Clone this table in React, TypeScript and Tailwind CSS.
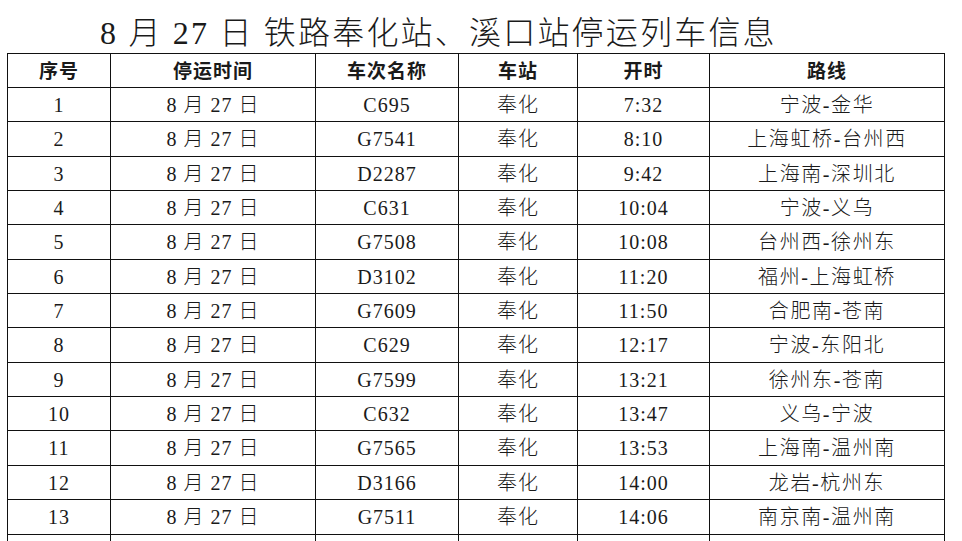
import React from "react";

const rows: [string, string, string, string, string, string][] = [
  ["1", "8 月 27 日", "C695", "奉化", "7:32", "宁波-金华"],
  ["2", "8 月 27 日", "G7541", "奉化", "8:10", "上海虹桥-台州西"],
  ["3", "8 月 27 日", "D2287", "奉化", "9:42", "上海南-深圳北"],
  ["4", "8 月 27 日", "C631", "奉化", "10:04", "宁波-义乌"],
  ["5", "8 月 27 日", "G7508", "奉化", "10:08", "台州西-徐州东"],
  ["6", "8 月 27 日", "D3102", "奉化", "11:20", "福州-上海虹桥"],
  ["7", "8 月 27 日", "G7609", "奉化", "11:50", "合肥南-苍南"],
  ["8", "8 月 27 日", "C629", "奉化", "12:17", "宁波-东阳北"],
  ["9", "8 月 27 日", "G7599", "奉化", "13:21", "徐州东-苍南"],
  ["10", "8 月 27 日", "C632", "奉化", "13:47", "义乌-宁波"],
  ["11", "8 月 27 日", "G7565", "奉化", "13:53", "上海南-温州南"],
  ["12", "8 月 27 日", "D3166", "奉化", "14:00", "龙岩-杭州东"],
  ["13", "8 月 27 日", "G7511", "奉化", "14:06", "南京南-温州南"],
  ["14", "8 月 27 日", "G7513", "奉化", "14:32", "南京南-温州南"],
];

const heights = [
  "h-[34px]",
  "h-[35px]",
  "h-[34px]",
  "h-[34px]",
  "h-[35px]",
  "h-[34px]",
  "h-[34px]",
  "h-[35px]",
  "h-[34px]",
  "h-[34px]",
  "h-[35px]",
  "h-[34px]",
  "h-[35px]",
  "h-[35px]",
];

const headers = ["序号", "停运时间", "车次名称", "车站", "开时", "路线"];

const bodyFont = {
  fontFamily: '"Liberation Serif", "Noto Sans CJK SC", serif',
};

export default function App() {
  return (
    <div className="w-[962px] h-[541px] overflow-hidden bg-white text-[#1a1a1a]">
      <div
        className="h-[53px] pl-[100px] pt-[15px] text-[32px] leading-[36px] font-light tracking-[2.2px] whitespace-nowrap"
        style={bodyFont}
      >
        8 月 27 日 铁路奉化站、溪口站停运列车信息
      </div>
      <div className="ml-[7px] w-[938px] border-l border-t border-[#111]">
        <div className="grid grid-cols-[103px_205px_143px_119px_132px_235px] h-[34px]">
          {headers.map((h) => (
            <div
              key={h}
              className="border-r border-b border-[#111] flex items-center justify-center text-[19px] font-bold tracking-[1px]"
              style={{ fontFamily: '"Noto Sans CJK SC", sans-serif' }}
            >
              {h}
            </div>
          ))}
        </div>
        {rows.map((r, i) => (
          <div
            key={i}
            className={
              "grid grid-cols-[103px_205px_143px_119px_132px_235px] " +
              heights[i]
            }
          >
            {r.map((c, j) => (
              <div
                key={j}
                className={
                  "border-r border-b border-[#111] flex items-center justify-center text-[20px] font-light whitespace-nowrap " +
                  (j === 5 ? "tracking-[1.6px]" : "tracking-[1px]")
                }
                style={bodyFont}
              >
                {c}
              </div>
            ))}
          </div>
        ))}
      </div>
    </div>
  );
}
